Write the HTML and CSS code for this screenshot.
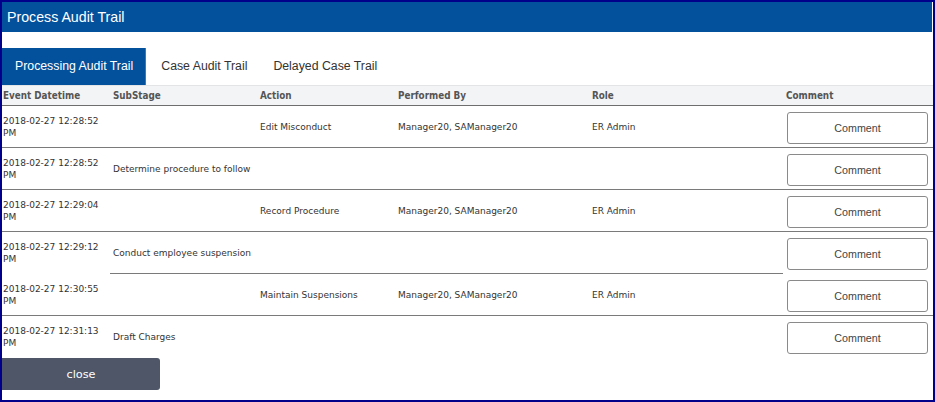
FILE: index.html
```html
<!DOCTYPE html>
<html>
<head>
<meta charset="utf-8">
<link rel="stylesheet" href="styles.css">
</head>
<body>
<div class="dialog">
  <div class="titlebar">Process Audit Trail</div>
  <div class="tabs">
    <div class="tab active">Processing Audit Trail</div>
    <div class="tab">Case Audit Trail</div>
    <div class="tab">Delayed Case Trail</div>
  </div>
  <table class="grid">
    <colgroup>
      <col class="c-date"><col class="c-sub"><col class="c-act"><col class="c-by"><col class="c-role"><col class="c-com">
    </colgroup>
    <thead>
      <tr><th>Event Datetime</th><th>SubStage</th><th>Action</th><th>Performed By</th><th>Role</th><th>Comment</th></tr>
    </thead>
    <tbody>
      <tr><td>2018-02-27 12:28:52 PM</td><td></td><td>Edit Misconduct</td><td>Manager20, SAManager20</td><td>ER Admin</td><td class="cbtn"><button class="comment">Comment</button></td></tr>
      <tr><td>2018-02-27 12:28:52 PM</td><td>Determine procedure to follow</td><td></td><td></td><td></td><td class="cbtn"><button class="comment">Comment</button></td></tr>
      <tr><td>2018-02-27 12:29:04 PM</td><td></td><td>Record Procedure</td><td>Manager20, SAManager20</td><td>ER Admin</td><td class="cbtn"><button class="comment">Comment</button></td></tr>
      <tr><td class="nb">2018-02-27 12:29:12 PM</td><td>Conduct employee suspension</td><td></td><td></td><td></td><td class="cbtn nb"><button class="comment">Comment</button></td></tr>
      <tr><td>2018-02-27 12:30:55 PM</td><td></td><td>Maintain Suspensions</td><td>Manager20, SAManager20</td><td>ER Admin</td><td class="cbtn"><button class="comment">Comment</button></td></tr>
      <tr class="last"><td>2018-02-27 12:31:13 PM</td><td>Draft Charges</td><td></td><td></td><td></td><td class="cbtn"><button class="comment">Comment</button></td></tr>
    </tbody>
  </table>
  <button class="close">close</button>
</div>
</body>
</html>
```
FILE: styles.css
```css
html, body {
  margin: 0;
  padding: 0;
  background: #ffffff;
}
.dialog {
  box-sizing: border-box;
  width: 935px;
  height: 402px;
  border: 2px solid #00008a;
  background: #ffffff;
  display: flex;
  flex-direction: column;
  overflow: hidden;
}
.titlebar {
  height: 30px;
  line-height: 30px;
  margin-right: 1px;
  padding-left: 5px;
  background: #03519c;
  color: #ffffff;
  font-family: "Liberation Sans", Arial, sans-serif;
  font-size: 14.2px;
}
.tabs {
  margin-top: 16px;
  height: 37px;
  display: flex;
}
.tab {
  padding: 0 13px;
  line-height: 37px;
  font-family: "Liberation Sans", Arial, sans-serif;
  font-size: 12.3px;
  color: #333333;
}
.tab.active {
  background: #03519c;
  color: #ffffff;
  padding-right: 12px;
  margin-right: 2px;
  border-right: 1px solid #3a78b8;
}
.grid {
  border-collapse: collapse;
  table-layout: fixed;
  width: 931px;
  font-family: "DejaVu Sans", Verdana, sans-serif;
  font-size: 9px;
  color: #333333;
}
.c-date { width: 108px; }
.c-sub { width: 147px; }
.c-act { width: 138px; }
.c-by { width: 194px; }
.c-role { width: 194px; }
.c-com { width: 150px; }
.grid th {
  height: 19px;
  padding: 0 0 0 3px;
  text-align: left;
  background: #f3f4f6;
  border-top: 1px solid #e3e4e6;
  border-bottom: 1px solid #6e6e6e;
  font-family: "DejaVu Sans Condensed", "DejaVu Sans", sans-serif;
  font-weight: bold;
  font-size: 9.8px;
  color: #555555;
}
.grid th:first-child { padding-left: 1px; }
.grid td {
  height: 41px;
  padding: 0 0 0 3px;
  line-height: 12px;
  vertical-align: middle;
  border-bottom: 1px solid #7a7a7a;
}
.grid td:first-child { padding-left: 1px; }
.grid td.nb { border-bottom-color: transparent; }
.grid tr.last td { border-bottom: none; }
.grid td.cbtn { padding-left: 4px; }
.comment {
  display: block;
  box-sizing: border-box;
  width: 141px;
  height: 32px;
  margin-top: 2px;
  padding: 0;
  background: #ffffff;
  border: 1px solid #8a8a8a;
  border-radius: 3px;
  font-family: "Liberation Sans", Arial, sans-serif;
  font-size: 10.7px;
  color: #444444;
}
.close {
  margin-top: 1px;
  width: 158px;
  height: 32px;
  padding: 0;
  border: none;
  border-radius: 0 3px 3px 0;
  background: #4e5667;
  color: #ffffff;
  font-family: "DejaVu Sans", Verdana, sans-serif;
  font-size: 11.3px;
}
```
